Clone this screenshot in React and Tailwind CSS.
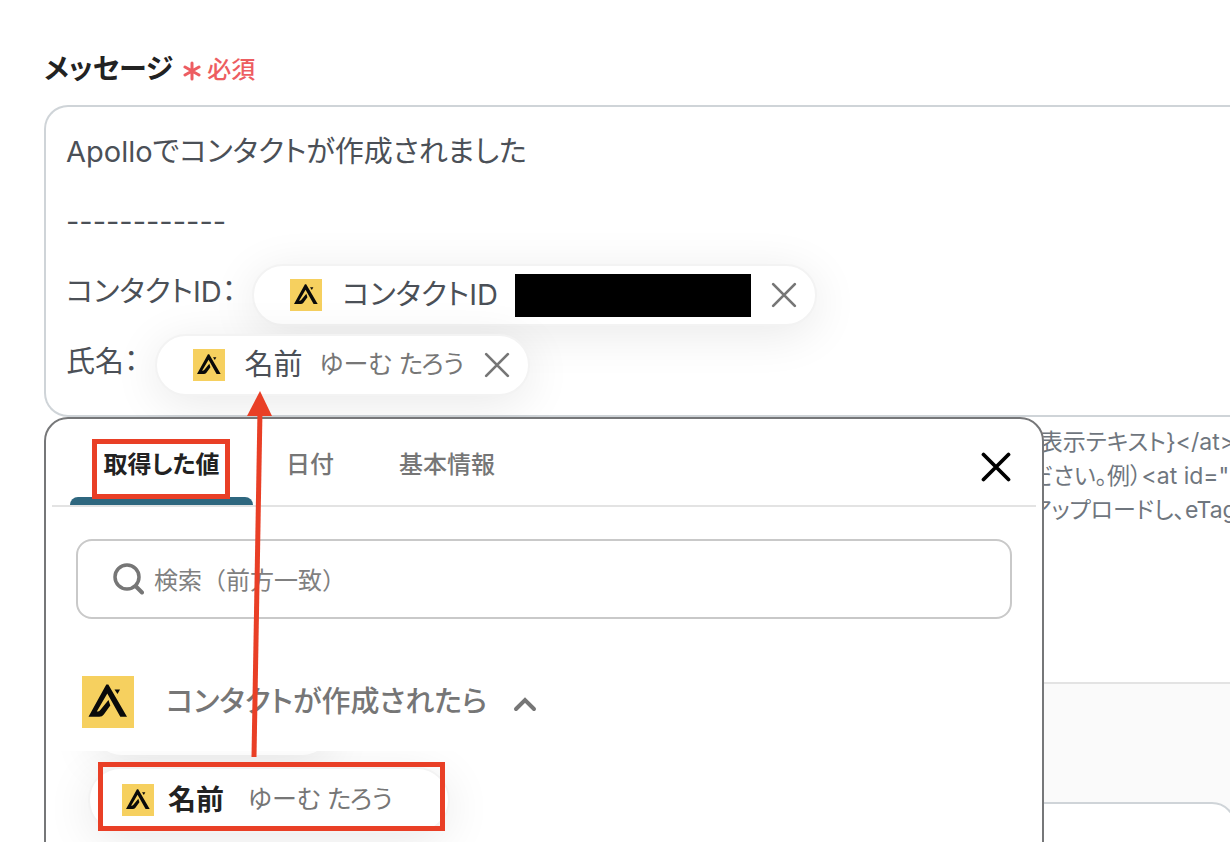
import React from "react";

const ApolloLogo = ({ className }) => (
  <svg viewBox="0 0 52 52" className={className} aria-hidden="true">
    <rect width="52" height="52" fill="#f6d05f" />
    <path
      d="M24.300 8.500h2L45 40.700h-6.700L25.300 17.500L14.800 35.500q2.200.300 3.700-1.800L26.500 24l1.800 5.500L21.800 38.500q-1.600 2.200-4.500 2.200H6.500z"
      fill="#0a0a0a"
    />
    <path d="M32.500 13.500h5.500l-2.500 4.500z" fill="#0a0a0a" />
  </svg>
);

const CrossIcon = ({ className }) => (
  <svg viewBox="0 0 24 24" className={className} fill="none" stroke="currentColor" strokeLinecap="round" aria-hidden="true">
    <path d="M2 2L22 22M22 2L2 22" />
  </svg>
);

const Pill = ({ label, children }) => (
  <span className="mt-1.5 flex h-[62px] items-center rounded-full border-2 border-[#f3f3f3] bg-white pr-4.5 pl-9 shadow-[0_8px_48px_rgba(0,0,0,0.09)]">
    <ApolloLogo className="mr-5 size-8" />
    <span className="mr-[17px]">{label}</span>
    {children}
    <button type="button" aria-label={`${label}を削除`} className="ml-5 text-[#767676]">
      <CrossIcon className="size-[26px] stroke-[2.500]" />
    </button>
  </span>
);

const tabs = ["取得した値", "日付", "基本情報"];

const ValuePicker = () => (
  <section className="absolute top-full left-0 z-10 h-[600px] w-[1000px] rounded-t-3xl border-2 border-[#767779] bg-white">
    <div className="mx-1.5 flex items-start border-b-2 border-[#e3e3e3] pr-[25px] pl-4.5">
      <div className="flex flex-1 gap-px text-2xl font-medium text-[#767676]">
        {tabs.map((tab, i) => (
          <button
            key={tab}
            type="button"
            className={
              i === 0
                ? "flex h-[86px] w-[183px] flex-col items-center justify-between pt-[30px] font-bold text-[#222]"
                : "flex h-[86px] flex-col px-8 pt-[30px]"
            }
          >
            {tab}
            {i === 0 && <span className="h-2 w-full rounded-t-lg bg-[#2e677f]" />}
          </button>
        ))}
      </div>
      <button type="button" aria-label="閉じる" className="mt-[33px] text-black">
        <CrossIcon className="size-[30px] stroke-3" />
      </button>
    </div>

    <div className="px-7.5 pt-8">
      <label className="flex h-20 items-center gap-2.5 rounded-2xl border-2 border-[#c9c9c9] px-8.5">
        <svg viewBox="0 0 32 32" className="size-8 text-[#767676]" fill="none" stroke="currentColor" strokeLinecap="round" aria-hidden="true">
          <circle cx="15" cy="14" r="12" strokeWidth="3.500" />
          <path d="M24 23.500L30 29.500" strokeWidth="4" />
        </svg>
        <input
          type="text"
          aria-label="検索（前方一致）"
          placeholder="検索（前方一致）"
          className="min-w-0 flex-1 pt-1 text-2xl outline-none [font-feature-settings:normal] placeholder:text-[#808080]"
        />
      </label>
    </div>

    <button type="button" className="mt-[57px] ml-9 flex items-center text-[29px] font-medium text-[#767676]">
      <ApolloLogo className="size-[52px]" />
      <span className="ml-8">コンタクトが作成されたら</span>
      <svg viewBox="0 0 24 16" className="mt-1 ml-6.5 h-4 w-6" fill="none" stroke="currentColor" strokeWidth="4" strokeLinecap="round" aria-hidden="true">
        <path d="M3 13L12 4L21 13" />
      </svg>
    </button>

    <div className="mt-[23px] h-32 overflow-hidden px-10.5">
      <div className="-mt-14 ml-1 h-[60px] w-60 rounded-full bg-white shadow-[0_8px_48px_rgba(0,0,0,0.09)]" />
      <button
        type="button"
        className="mt-3 flex h-[66px] w-[362px] items-center rounded-full border-2 border-[#f3f3f3] bg-white pl-8 shadow-[0_8px_48px_rgba(0,0,0,0.09)]"
      >
        <ApolloLogo className="size-8" />
        <span className="ml-3.5 text-[28px] font-bold text-[#222]">名前</span>
        <span className="ml-6 text-[25px] text-[#767676]">ゆーむ たろう</span>
      </button>
    </div>
  </section>
);

const Annotations = () => (
  <svg className="pointer-events-none absolute top-0 left-0 z-20 h-[842px] w-[500px]" viewBox="0 0 500 842" fill="none" stroke="#e93f26" aria-hidden="true">
    <rect x="94.500" y="441.500" width="133" height="55" strokeWidth="5" />
    <rect x="100.500" y="764.500" width="342" height="64" strokeWidth="5" />
    <path d="M254 757L260 410" strokeWidth="5" />
    <path d="M260 391L272 416H247z" fill="#e93f26" stroke="none" />
  </svg>
);

export default function App() {
  return (
    <main className="relative flex h-screen flex-col overflow-hidden bg-white font-[Inter,'Noto_Sans_CJK_JP',sans-serif] [font-feature-settings:'palt']">
      <div className="flex h-[105px] shrink-0 items-center gap-2.5 pt-8 pl-11">
        <h1 className="text-[28px] font-bold text-[#222]">メッセージ</h1>
        <span className="flex items-center gap-1.5 pt-0.5 text-2xl font-medium text-[#ed5d61]">
          <svg viewBox="0 0 18 20" className="mt-0.5 h-5 w-4.5" stroke="currentColor" strokeWidth="3" strokeLinecap="round" aria-hidden="true">
            <path d="M9 2V18M2 6L16 14M16 6L2 14" />
          </svg>
          必須
        </span>
      </div>

      <div className="relative ml-11">
        <div className="rounded-l-3xl border-2 border-r-0 border-[#cfd4d8] pt-2.5 pb-[18px] pl-5 text-[29px] text-[#4b5057]">
          <p className="leading-[70px]">Apolloでコンタクトが作成されました</p>
          <p className="leading-[70px]">------------</p>
          <div className="flex h-[70px] items-center gap-4">
            <span>コンタクトID：</span>
            <Pill label="コンタクトID">
              <span className="h-[43px] w-[236px] bg-black" />
            </Pill>
          </div>
          <div className="flex h-[70px] items-center gap-4">
            <span>氏名：</span>
            <Pill label="名前">
              <span className="text-[25px] text-[#767676]">ゆーむ たろう</span>
            </Pill>
          </div>
        </div>
        <ValuePicker />
      </div>

      <div className="h-[265px] shrink-0 overflow-hidden pt-2 pl-[1030px] text-[23px] leading-[34px] whitespace-nowrap text-[#6f767e]">
        <p>{"{表示テキスト}</at>"}</p>
        <p>ださい。例）{'<at id="'}</p>
        <p>アップロードし、eTag</p>
      </div>

      <div className="ml-11 flex-1 border-t-2 border-[#e3e3e3] bg-[#fafafa] pt-[118px]">
        <div className="-mr-1.5 h-60 rounded-3xl border-2 border-[#cfd4d8] bg-white" />
      </div>

      <Annotations />
    </main>
  );
}
